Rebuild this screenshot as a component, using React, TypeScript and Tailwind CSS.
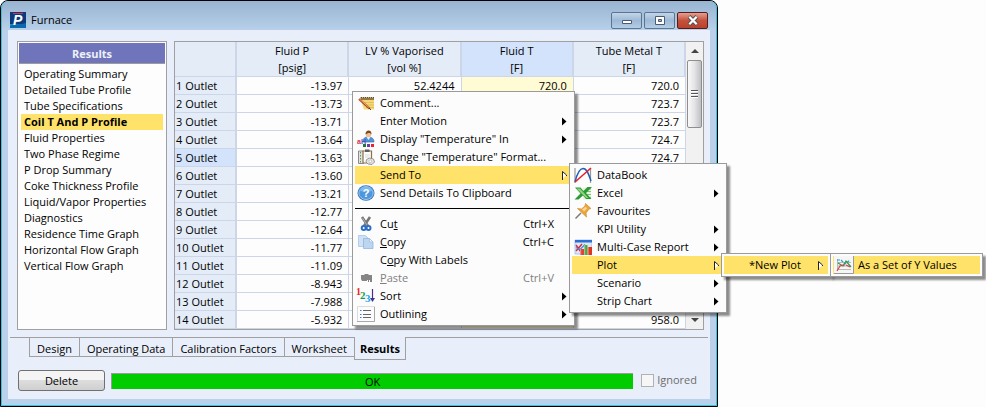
import type { ReactNode } from "react";

const reports = [
  "Operating Summary",
  "Detailed Tube Profile",
  "Tube Specifications",
  "Coil T And P Profile",
  "Fluid Properties",
  "Two Phase Regime",
  "P Drop Summary",
  "Coke Thickness Profile",
  "Liquid/Vapor Properties",
  "Diagnostics",
  "Residence Time Graph",
  "Horizontal Flow Graph",
  "Vertical Flow Graph",
];

const columns = [
  { name: "Fluid P", unit: "[psig]" },
  { name: "LV % Vaporised", unit: "[vol %]" },
  { name: "Fluid T", unit: "[F]" },
  { name: "Tube Metal T", unit: "[F]" },
];

const rows = [
  ["-13.97", "52.4244", "720.0", "720.0"],
  ["-13.73", "", "", "723.7"],
  ["-13.71", "", "", "723.7"],
  ["-13.64", "", "", "724.7"],
  ["-13.63", "", "", "724.7"],
  ["-13.60", "", "", ""],
  ["-13.21", "", "", ""],
  ["-12.77", "", "", ""],
  ["-12.64", "", "", ""],
  ["-11.77", "", "", ""],
  ["-11.09", "", "", ""],
  ["-8.943", "", "", ""],
  ["-7.988", "", "", ""],
  ["-5.932", "", "", "958.0"],
];

const tabs = ["Design", "Operating Data", "Calibration Factors", "Worksheet", "Results"];

function Icon({ children }: { children: ReactNode }) {
  return (
    <svg viewBox="0 0 18 18" className="h-[18px] w-[18px]" aria-hidden="true">
      {children}
    </svg>
  );
}

const CommentIcon = () => (
  <Icon>
    <path d="M3.500 5h13.500v10.500H7z" fill="#f3d878" />
    <path d="M3 3.500h14V6H4z" fill="#94783f" />
    <path d="M4 3.500h13" stroke="#5f4a24" strokeWidth="1" strokeDasharray="1 1" />
    <path d="M6 8.500h11M7 11h10M9 13.500h8" stroke="#dcb54c" strokeWidth="0.7" />
    <path d="M2 5l10.500 9.500" stroke="#a8492a" strokeWidth="2.200" />
    <path d="M2.500 5l10 9" stroke="#f5a06a" strokeWidth="1" />
    <path d="M12 14l2 1.800" stroke="#333" strokeWidth="1" />
  </Icon>
);

const DisplayIcon = () => (
  <Icon>
    <path d="M6 12c0-4 2-5 5-5s6 1 6 5z" fill="#4f93d8" stroke="#2c66a8" strokeWidth="0.6" />
    <path d="M9.500 7h4l-2 3z" fill="#e8f3ff" />
    <circle cx="11.500" cy="4.500" r="2.700" fill="#f1bf8f" />
    <path d="M8.500 4.500c0-3 1.500-4 3.200-4s3 1.200 2.800 4c-1-2-3.500-2.200-6 0z" fill="#7a4a1c" />
    <text x="0" y="14" fontSize="7" fontWeight="700" fill="#d8304a" fontFamily="Liberation Sans, sans-serif">a</text>
    <text x="4" y="14" fontSize="7" fontWeight="700" fill="#4a55b8" fontFamily="Liberation Sans, sans-serif">H</text>
    <path d="M6 14h3v3H6z" fill="#1d7a3a" />
    <path d="M10 14h3v3h-3z" fill="#6a3fa8" />
    <path d="M14 14h3v3h-3z" fill="#ef1f2f" />
  </Icon>
);

const FormatIcon = () => (
  <Icon>
    <path d="M1.500 3h5v12.500h-5z" fill="#e2e2e0" stroke="#8a8a8a" strokeWidth="1" />
    <path d="M3.500 4v11" stroke="#5a9a4a" strokeWidth="1" strokeDasharray="1.500 1.500" />
    <path d="M6 3h8.500v12H6z" fill="#fdfdfb" stroke="#8b6f4c" strokeWidth="1.200" />
    <path d="M8 1.500h4.500v2.500H8z" fill="#5d5d5f" />
    <path d="M8 7h5M8 9h4" stroke="#d0d0d0" strokeWidth="0.800" />
    <path d="M9.500 11.500l3-1.500 4 1 1 3-2.500 2.500-4-.5-2-2z" fill="#e4e4e4" stroke="#8c8c8c" strokeWidth="0.900" />
    <circle cx="13.300" cy="13.300" r="1.400" fill="#fff" stroke="#a5a5a5" strokeWidth="0.600" />
  </Icon>
);

const HelpIcon = () => (
  <Icon>
    <ellipse cx="9" cy="9" rx="8.500" ry="7.800" fill="#2f6fb8" />
    <ellipse cx="9" cy="9" rx="7.200" ry="6.500" fill="#4f97dc" stroke="#b9dcf7" strokeWidth="0.8" />
    <path d="M3 7c1-3 3-4.200 6-4.200s5 1.200 6 4.200c-4 1-8 1-12 0z" fill="#7db9ec" />
    <text x="9" y="13" textAnchor="middle" fontSize="11" fontWeight="700" fill="#fff" fontFamily="Liberation Sans, sans-serif">?</text>
  </Icon>
);

const CutIcon = () => (
  <Icon>
    <path d="M5 2l6 9M13 2l-6 9" stroke="#777" strokeWidth="2.600" />
    <path d="M5.500 3l4.500 7" stroke="#b5b5b5" strokeWidth="0.900" />
    <circle cx="6.700" cy="13" r="2" fill="#fff" stroke="#2c6fc4" strokeWidth="2" />
    <circle cx="11.500" cy="13" r="2" fill="#fff" stroke="#2c6fc4" strokeWidth="2" />
  </Icon>
);

const CopyIcon = () => (
  <Icon>
    <path d="M1.500 2.500h7l3 3v8h-10z" fill="#cfe2f5" stroke="#a9c5e6" strokeWidth="0.800" />
    <path d="M6.500 5.500h6l3.500 3.500v6.500H6.500z" fill="#bcd6f0" stroke="#93b4e0" strokeWidth="0.800" />
    <path d="M12.500 5.500v3.500H16z" fill="#eef6fd" stroke="#93b4e0" strokeWidth="0.600" />
  </Icon>
);

const PasteIcon = () => (
  <Icon>
    <path d="M4 6h3l1-1h3l1 1h3v7h-2v-2h-1v2h-1v-2h-1v1H5l-1-2z" fill="#858585" />
  </Icon>
);

const SortIcon = () => (
  <svg viewBox="0 0 20 18" className="h-[18px] w-5 shrink-0 overflow-visible" aria-hidden="true">
    <g fontFamily="Liberation Serif, serif" fontWeight="700">
      <text x="0" y="8" fontSize="10" fill="#ec1c24">1</text>
      <text x="4" y="12" fontSize="11" fill="#12a04b">2</text>
      <text x="9" y="15" fontSize="11" fill="#1ea5e8">3</text>
    </g>
    <path d="M16.500 2v10" stroke="#4b2f8f" strokeWidth="1.200" />
    <path d="M14 11h5l-2.500 4z" fill="#4b2f8f" />
  </svg>
);

const OutlineIcon = () => (
  <Icon>
    <path d="M0.500 1.500h17v15H.5z" fill="#fcfcfc" stroke="#dcdcdc" />
    <path d="M0 16.500h17.500V2" fill="none" stroke="#a8a8a8" />
    <path d="M6 5.500h8M6 9.500h8M6 12.500h8" stroke="#666" />
    <path d="M3 5.500h1.500M3 9.500h1.500M3 12.500h1.500" stroke="#2f7fe0" />
  </Icon>
);

const DataBookIcon = () => (
  <Icon>
    <path d="M1 2v15M16.500 2v15" stroke="#999" strokeWidth="1.200" />
    <path d="M1 16C3 8 5 2.500 9 2.500S14.500 8 17 15" fill="none" stroke="#1f5fb5" strokeWidth="1.500" />
    <path d="M1 16L17 2" stroke="#ee1c2e" strokeWidth="1.600" />
  </Icon>
);

const ExcelIcon = () => (
  <Icon>
    <path d="M9 3.500h8v12H9z" fill="#e3f5de" />
    <path d="M13 5h4M13 7.500h4M13 10.500h4M13 13.500h4" stroke="#7cc46e" strokeWidth="1" />
    <path d="M1 3.500h5.500l3 3.500 4-4h4.500l-6 6 5.500 6h-5.500l-3-3.500-4.500 4H.5l6-6z" fill="#2b9a36" />
    <path d="M2.500 4.500H6l8.500 9.500h-2.300z" fill="#8fd47c" />
  </Icon>
);

const PinIcon = () => (
  <Icon>
    <path d="M7 11L1.500 16.500" stroke="#777" strokeWidth="1.500" />
    <path d="M3.500 6.500l4 .5 3.500-3 .5-2.500 5.500 5-2 .5-3 4 .5 4z" fill="#eba43a" stroke="#d08c2c" strokeWidth="0.700" />
    <path d="M8 7.500l3.500-2.800 1.700 1.500-3 3.200z" fill="#fbd68d" />
  </Icon>
);

const ReportIcon = () => (
  <Icon>
    <path d="M1 2h17v14H1z" fill="#dbe8f8" stroke="#9db9df" strokeWidth="0.800" />
    <path d="M1 2h17v2.500H1z" fill="#2d6fd0" />
    <path d="M2 7l5 7M2 13l6-7" stroke="#d42b3a" strokeWidth="1.400" />
    <path d="M2 9.500l4 2 3-3 2-2" stroke="#4a87d8" strokeWidth="1.200" fill="none" />
    <path d="M6 11h4v6H6z" fill="#e04038" />
    <path d="M10 7h3.500v10H10z" fill="#48a83d" />
    <path d="M13.500 9H18v8h-4.500z" fill="#e2331f" />
    <path d="M10 7h1.200v10H10zM13.500 9h1.300v8h-1.300zM6 11h1.200v6H6z" fill="#fff" opacity="0.400" />
  </Icon>
);

const PlotIcon = () => (
  <svg viewBox="0 0 20 18" className="h-[18px] w-5 shrink-0" aria-hidden="true">
    <path d="M0 0h20v18H0z" fill="#f6f6f4" />
    <path d="M0 17.500h19.500V0" fill="none" stroke="#9a9a9a" />
    <path d="M3.500 3v10.500H17M4 6.500h13M4 10h13" stroke="#aaa" strokeWidth="0.800" fill="none" />
    <path d="M3 4l4 0 4 4 5-4" stroke="#2b9ad6" strokeWidth="1.200" fill="none" strokeDasharray="3 1" />
    <path d="M4 7l5 3 3-5 5 6" stroke="#2f9a4a" strokeWidth="1.200" fill="none" />
    <path d="M3 15l3-5 3-1h2M12 9l4 2" stroke="#d8434a" strokeWidth="1.200" fill="none" />
  </svg>
);

type Entry = {
  label: ReactNode;
  icon?: ReactNode;
  keys?: string;
  sub?: boolean;
  open?: boolean;
  disabled?: boolean;
};

const mainMenu: Entry[] = [
  { label: "Comment...", icon: <CommentIcon /> },
  { label: "Enter Motion", sub: true },
  { label: 'Display "Temperature" In', icon: <DisplayIcon />, sub: true },
  { label: 'Change "Temperature" Format...', icon: <FormatIcon /> },
  { label: "Send To", sub: true, open: true },
  { label: "Send Details To Clipboard", icon: <HelpIcon /> },
];

const editMenu: Entry[] = [
  { label: <>Cu<u>t</u></>, icon: <CutIcon />, keys: "Ctrl+X" },
  { label: <><u>C</u>opy</>, icon: <CopyIcon />, keys: "Ctrl+C" },
  { label: <>C<u>o</u>py With Labels</> },
  { label: <><u>P</u>aste</>, icon: <PasteIcon />, keys: "Ctrl+V", disabled: true },
  { label: "Sort", icon: <SortIcon />, sub: true },
  { label: "Outlining", icon: <OutlineIcon />, sub: true },
];

const sendMenu: Entry[] = [
  { label: "DataBook", icon: <DataBookIcon /> },
  { label: "Excel", icon: <ExcelIcon />, sub: true },
  { label: "Favourites", icon: <PinIcon /> },
  { label: "KPI Utility", sub: true },
  { label: "Multi-Case Report", icon: <ReportIcon />, sub: true },
  { label: "Plot", sub: true, open: true },
  { label: "Scenario", sub: true },
  { label: "Strip Chart", sub: true },
];

function MenuItem({ label, icon, keys, sub, open, disabled }: Entry) {
  return (
    <li>
      <button
        type="button"
        disabled={disabled}
        className={`flex h-[18px] w-full items-center text-left leading-[18px] whitespace-nowrap ${
          open ? "bg-[#ffe269]" : ""
        } ${disabled ? "text-[#808080]" : "text-black"}`}
      >
        <span className="flex w-[25px] shrink-0 justify-center pr-1">{icon}</span>
        <span className="grow">{label}</span>
        {keys && <span className="pr-[18px]">{keys}</span>}
        {sub && (
          <svg viewBox="0 0 7 9" className="mr-1 h-[9px] w-[7px]" aria-hidden="true">
            {open ? (
              <>
                <path d="M1 0l5 4-5 4z" fill="#fffdf0" />
                <path d="M1.500 9V.5L5.500 4v1" fill="none" stroke="#222" />
              </>
            ) : (
              <path d="M1 .5l4.500 4L1 8.500z" fill="#000" />
            )}
          </svg>
        )}
      </button>
    </li>
  );
}

const menuBox =
  "absolute border border-[#9a9a9a] bg-[#fcfcfc] p-0.5 shadow-[3px_3px_2px_rgba(0,0,0,0.45)]";

function Sidebar() {
  return (
    <nav
      aria-label="Results"
      className="flex w-[150px] shrink-0 flex-col border border-[#a0a0a0] bg-[#fdfdfd] p-px"
    >
      <h2 className="h-[21px] border-b border-[#9c9c9c] bg-[#7075bb] text-center leading-[22px] font-bold text-[#eef0fa]">
        Results
      </h2>
      <ul className="px-0.5 pt-0.5">
        {reports.map((r) => (
          <li key={r}>
            <a
              href="#"
              className={`block h-4 pl-[3px] leading-4 whitespace-nowrap ${
                r === "Coil T And P Profile" ? "bg-[#ffe269] font-bold" : ""
              }`}
            >
              {r}
            </a>
          </li>
        ))}
      </ul>
    </nav>
  );
}

function Grid() {
  return (
    <div className="flex grow border border-[#a0a0a0] bg-[#fdfdfd]">
      <table className="w-0 grow table-fixed border-separate border-spacing-0">
        <colgroup>
          <col className="w-[62px]" />
          <col />
          <col />
          <col />
          <col />
        </colgroup>
        <thead>
          <tr className="h-[35px]">
            <td className="border-r-2 border-b border-[#cdd6e8] bg-[#e4ecf8]" />
            {columns.map((c, i) => (
              <th
                key={c.name}
                scope="col"
                className={`border-r-2 border-b border-[#cdd6e8] p-0 leading-[17px] font-normal whitespace-nowrap ${
                  i === 2 ? "bg-[#d3e3fb]" : "bg-[#e4ecf8]"
                }`}
              >
                {c.name}
                <br />
                {c.unit}
              </th>
            ))}
          </tr>
        </thead>
        <tbody>
          {rows.map((row, i) => (
            <tr key={i} className="h-[18px]">
              <th
                scope="row"
                className={`border-r-2 border-b border-[#cdd6e8] py-0 pr-0 pl-px text-left leading-[17px] font-normal whitespace-nowrap ${
                  i === 4 ? "bg-[#d3e3fb]" : "bg-[#e4ecf8]"
                }`}
              >
                {i + 1} Outlet
              </th>
              {row.map((v, j) => (
                <td
                  key={j}
                  className={`border-r border-b border-[#cdd6e8] py-0 pr-[6px] pl-0 text-right leading-[17px] ${
                    j === 2 ? "bg-[#fffcd5]" : ""
                  }`}
                >
                  {v}
                </td>
              ))}
            </tr>
          ))}
        </tbody>
      </table>
      <div className="flex w-[17px] shrink-0 flex-col items-center bg-[#f1f1f1]">
        <button type="button" aria-label="Scroll up" className="flex h-[18px] w-full items-center justify-center">
          <svg viewBox="0 0 8 4" className="h-1 w-2">
            <path d="M0 4l4-4 4 4z" fill="#444" />
          </svg>
        </button>
        <div className="flex h-[68px] w-[15px] flex-col items-center justify-center gap-px rounded-xs border border-[#8e8e8e] bg-linear-to-r from-[#fafafa] via-[#e4e4e6] to-[#bfc0c4]">
          <span className="h-0.5 w-[7px] border-t border-[#555] bg-white" />
          <span className="h-0.5 w-[7px] border-t border-[#555] bg-white" />
          <span className="h-0.5 w-[7px] border-t border-[#555] bg-white" />
        </div>
        <button type="button" aria-label="Scroll down" className="mt-auto flex h-[18px] w-full items-center justify-center">
          <svg viewBox="0 0 8 4" className="h-1 w-2">
            <path d="M0 0l4 4 4-4z" fill="#444" />
          </svg>
        </button>
      </div>
    </div>
  );
}

const captionButton =
  "flex h-[17px] w-[31px] items-center justify-center rounded-xs border";

function TitleBar() {
  return (
    <header className="flex h-7 items-center gap-[5px] pt-2 pr-0.5 pl-0.5">
      <svg viewBox="0 0 16 16" className="h-4 w-4" aria-hidden="true">
        <path d="M0 0h16v16H0z" fill="#0d3a7c" />
        <path d="M0 12h16v4H0z" fill="#1590c8" />
        <path d="M0 14c5-3 10-1 16-3v5H0z" fill="#0b6aac" />
        <path d="M3 1.500h10" stroke="#e0323c" strokeWidth="1" />
        <text x="3" y="13" fontSize="14" fontWeight="700" fontStyle="italic" fill="#fff" fontFamily="Liberation Sans, sans-serif">P</text>
      </svg>
      <h1 className="grow leading-4">Furnace</h1>
      <div className="flex gap-0.5">
        <button type="button" aria-label="Minimize" className={`${captionButton} border-[#5b7590] bg-linear-to-b from-[#c3d6ea] via-[#9db9d6] to-[#b4cce6]`}>
          <svg viewBox="0 0 12 11" className="h-[11px] w-3">
            <path d="M1.500 5.500h9v3h-9z" fill="#fff" stroke="#4a5a70" />
          </svg>
        </button>
        <button type="button" aria-label="Maximize" className={`${captionButton} border-[#5b7590] bg-linear-to-b from-[#c3d6ea] via-[#9db9d6] to-[#b4cce6]`}>
          <svg viewBox="0 0 12 11" className="h-[11px] w-3">
            <path d="M1.500 1.500h9v8h-9z" fill="#fff" stroke="#4a5a70" />
            <path d="M4.500 4.500h3v2h-3z" fill="#9db9d6" stroke="#4a5a70" />
          </svg>
        </button>
        <button type="button" aria-label="Close" className={`${captionButton} border-[#5a1a1c] bg-linear-to-b from-[#e2a093] via-[#c5503c] to-[#b8432c]`}>
          <svg viewBox="0 0 12 11" className="h-[11px] w-3">
            <path d="M2 1.500l8 8M10 1.500l-8 8" stroke="#54504f" strokeWidth="4" />
            <path d="M2.300 1.800l7.400 7.400M9.700 1.800l-7.400 7.400" stroke="#fff" strokeWidth="2.300" />
          </svg>
        </button>
      </div>
    </header>
  );
}

export default function App() {
  return (
    <div className="relative min-h-screen bg-[#fdfdfd] font-['Open_Sans','Noto_Sans',sans-serif] text-[11px] text-black">
      <main className="w-full max-w-[718px] rounded-t-lg border border-black bg-[#b9d1ea]">
        <div className="rounded-t-lg border border-t-0 border-[#35c4e0] bg-linear-to-b from-[#98b4d1] to-[#b9d1ea] to-[30px] px-[6px] pt-px pb-[6px]">
          <TitleBar />
          <div className="bg-[#e8effa] pt-[11px] pb-2">
            <div className="flex gap-[7px] pr-[6px] pl-[9px]">
              <Sidebar />
              <Grid />
            </div>
            <div role="tablist" className="mt-[7px] flex items-start px-0.5">
              <span className="w-[19px] border-t border-[#a0a0a0]" />
              {tabs.map((t) =>
                t === "Results" ? (
                  <button key={t} type="button" role="tab" aria-selected="true" className="h-[23px] border-r border-b border-l border-[#a0a0a0] px-[5px] leading-6 font-bold">
                    {t}
                  </button>
                ) : (
                  <button key={t} type="button" role="tab" aria-selected="false" className="h-5 border-t border-b border-l border-[#a0a0a0] px-[7px] leading-[22px] whitespace-nowrap">
                    {t}
                  </button>
                ),
              )}
              <span className="grow border-t border-[#a0a0a0]" />
            </div>
            <div className="mt-[10px] flex items-center gap-[6px] pr-[13px] pl-[10px]">
              <button type="button" className="h-[21px] w-[87px] rounded-[3px] border border-[#707070] bg-linear-to-b from-[#f4f4f4] from-50% via-[#dddddd] via-50% to-[#cfcfcf] leading-[19px]">
                Delete
              </button>
              <div role="status" className="h-4 grow border-t border-l border-t-[#9a9a9a] border-l-[#9a9a9a] bg-[#00cc00] text-center leading-[15px]">
                OK
              </div>
              <label className="flex items-center gap-[3px] pl-0.5 text-[#6d6d6d]">
                <input type="checkbox" disabled className="h-[13px] w-[13px] appearance-none border border-[#b1b1b1] bg-[#f6f6f6]" />
                Ignored
              </label>
            </div>
          </div>
        </div>
      </main>

      <div role="menu" aria-label="Cell" className={`${menuBox} top-[91px] left-[352px] w-[223px]`}>
        <ul>{mainMenu.map((m, i) => <MenuItem key={i} {...m} />)}</ul>
        <hr className="my-[6px] border-t border-black" />
        <ul>{editMenu.map((m, i) => <MenuItem key={i} {...m} />)}</ul>
      </div>
      <div role="menu" aria-label="Send To" className={`${menuBox} top-[163px] left-[569px] w-[158px]`}>
        <ul>{sendMenu.map((m, i) => <MenuItem key={i} {...m} />)}</ul>
      </div>
      <div role="menu" aria-label="Plot" className={`${menuBox} top-[253px] left-[721px] w-[110px]`}>
        <ul><MenuItem label="*New Plot" sub open /></ul>
      </div>
      <div role="menu" aria-label="New Plot" className={`${menuBox} top-[253px] left-[830px] w-[153px]`}>
        <ul><MenuItem label="As a Set of Y Values" icon={<PlotIcon />} open /></ul>
      </div>
    </div>
  );
}
